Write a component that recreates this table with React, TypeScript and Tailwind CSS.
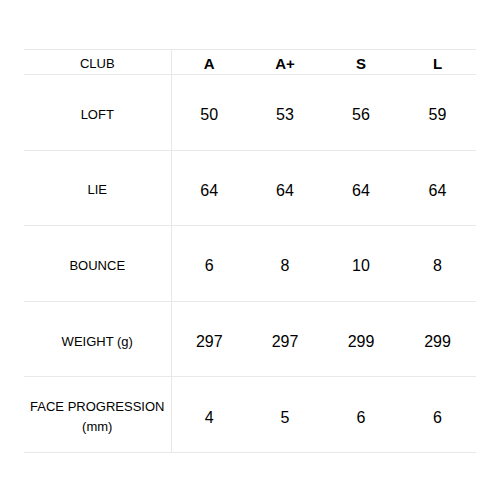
const cols = ["A", "A+", "S", "L"];

const rows: { label: React.ReactNode; values: string[] }[] = [
  { label: "LOFT", values: ["50", "53", "56", "59"] },
  { label: "LIE", values: ["64", "64", "64", "64"] },
  { label: "BOUNCE", values: ["6", "8", "10", "8"] },
  { label: "WEIGHT (g)", values: ["297", "297", "299", "299"] },
  {
    label: (
      <>
        FACE PROGRESSION
        <br />
        (mm)
      </>
    ),
    values: ["4", "5", "6", "6"],
  },
];

export default function App() {
  return (
    <div className="w-[500px] h-[500px] bg-white pt-[49px] pl-[24px] font-['Liberation_Sans',Arial,sans-serif] text-black">
      <table className="w-[452px] table-fixed border-collapse">
        <colgroup>
          <col className="w-[147px]" />
          <col className="w-[76px]" />
          <col className="w-[76px]" />
          <col className="w-[76px]" />
          <col className="w-[77px]" />
        </colgroup>
        <thead>
          <tr className="h-[25px] border-y border-[#e8e8e8]">
            <th className="border-r border-[#e8e8e8] text-[13px] font-normal text-center pt-[4px] leading-[16px]">CLUB</th>
            {cols.map((c) => (
              <th key={c} className="text-[15px] font-bold text-center pt-[4px] leading-[16px]">
                {c}
              </th>
            ))}
          </tr>
        </thead>
        <tbody>
          {rows.map((r, i) => (
            <tr key={i} className="h-[75.6px] border-b border-[#e8e8e8]">
              <td className="border-r border-[#e8e8e8] text-[13px] leading-[20px] text-center pt-[5px]">
                {r.label}
              </td>
              {r.values.map((v, j) => (
                <td key={j} className="text-[16px] text-center pt-[6px]">
                  {v}
                </td>
              ))}
            </tr>
          ))}
        </tbody>
      </table>
    </div>
  );
}
